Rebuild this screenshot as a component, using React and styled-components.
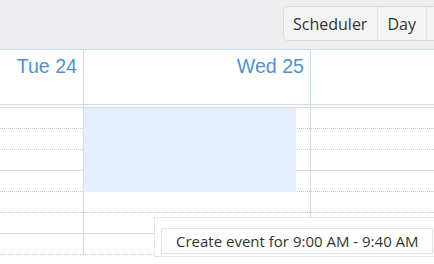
import styled, { createGlobalStyle } from "styled-components";

const GlobalStyle = createGlobalStyle`
  html, body {
    margin: 0;
    padding: 0;
    background: #ffffff;
  }
  * {
    box-sizing: border-box;
  }
`;

const columns = [
  { day: "Tue 24", width: "84px", selection: false },
  { day: "Wed 25", width: "227px", selection: true },
  { day: "", width: "auto", selection: false },
];

const views = ["Scheduler", "Day", ""];

const slots = ["dotted", "dotted", "solid", "dotted", "dotted", "solid", "dotted"];

const gridColumns = columns.map((c) => (c.width === "auto" ? "1fr" : c.width)).join(" ");

function App() {
  return (
    <Page>
      <GlobalStyle />
      <Toolbar>
        <ButtonGroup>
          {views.map((view, index) => (
            <ViewButton key={index}>{view}</ViewButton>
          ))}
        </ButtonGroup>
      </Toolbar>
      <HeaderRow $columns={gridColumns}>
        {columns.map((col, index) => (
          <HeaderCell key={index}>{col.day}</HeaderCell>
        ))}
      </HeaderRow>
      <BodyRow $columns={gridColumns}>
        {columns.map((col, index) => (
          <BodyColumn key={index}>
            <SlotList>
              {slots.map((kind, i) => (
                <Slot key={i} $kind={kind} />
              ))}
            </SlotList>
            {col.selection && <Selection />}
          </BodyColumn>
        ))}
      </BodyRow>
      <Hint>
        <HintText>Create event for 9:00 AM - 9:40 AM</HintText>
      </Hint>
    </Page>
  );
}

const Page = styled.div`
  position: relative;
  width: 434px;
  height: 264px;
  overflow: hidden;
  background: #ffffff;
`;

const Toolbar = styled.div`
  display: flex;
  height: 50px;
  padding: 6px 0 0 283px;
  background: #efeff1;
  border-bottom: 1px solid #c9dbf6;
  overflow: hidden;
`;

const ButtonGroup = styled.div`
  display: flex;
  height: 35px;
  flex-shrink: 0;
  border: 1px solid #dcdcdf;
  border-right: none;
  border-radius: 5px 0 0 5px;
  background: #f4f4f5;
`;

const ViewButton = styled.div`
  display: flex;
  align-items: center;
  min-width: 40px;
  padding: 0 10px 0 9px;
  font-family: "Open Sans", sans-serif;
  font-size: 16px;
  color: #333333;
  & + & {
    border-left: 1px solid #e2e2e4;
  }
`;

const HeaderRow = styled.div`
  display: grid;
  grid-template-columns: ${({ $columns }) => $columns};
  height: 55px;
  border-bottom: 1px solid #c9dbf6;
`;

const HeaderCell = styled.div`
  padding: 5px 6px 0 0;
  text-align: right;
  font-family: "Liberation Sans", Arial, sans-serif;
  font-size: 19.6px;
  color: #4b92d8;
  border-right: 1px solid #c9dbf6;
  &:last-child {
    border-right: none;
  }
`;

const BodyRow = styled.div`
  display: grid;
  grid-template-columns: ${({ $columns }) => $columns};
`;

const BodyColumn = styled.div`
  position: relative;
  padding-top: 2px;
  border-right: 1px solid #dadada;
  &:last-child {
    border-right: none;
  }
`;

const SlotList = styled.div`
  border-top: 1px solid #dadada;
`;

const Slot = styled.div`
  height: 21px;
  border-bottom: 1px ${({ $kind }) => ($kind === "solid" ? "solid #dadada" : "dotted #c8c8c8")};
`;

const Selection = styled.div`
  position: absolute;
  top: 3px;
  left: 0;
  width: 212px;
  height: 84px;
  background: #e5eefd;
`;

const Hint = styled.div`
  position: absolute;
  left: 154px;
  top: 217px;
  padding: 10px 12px 2px 6px;
  background: #ffffff;
  border: 1px solid #e6e6e6;
`;

const HintText = styled.div`
  width: 272px;
  height: 26px;
  padding-left: 14px;
  display: flex;
  align-items: center;
  border: 1px solid #e2e2e2;
  font-family: "Open Sans", sans-serif;
  font-size: 15px;
  color: #333333;
  white-space: nowrap;
`;

export default App;
